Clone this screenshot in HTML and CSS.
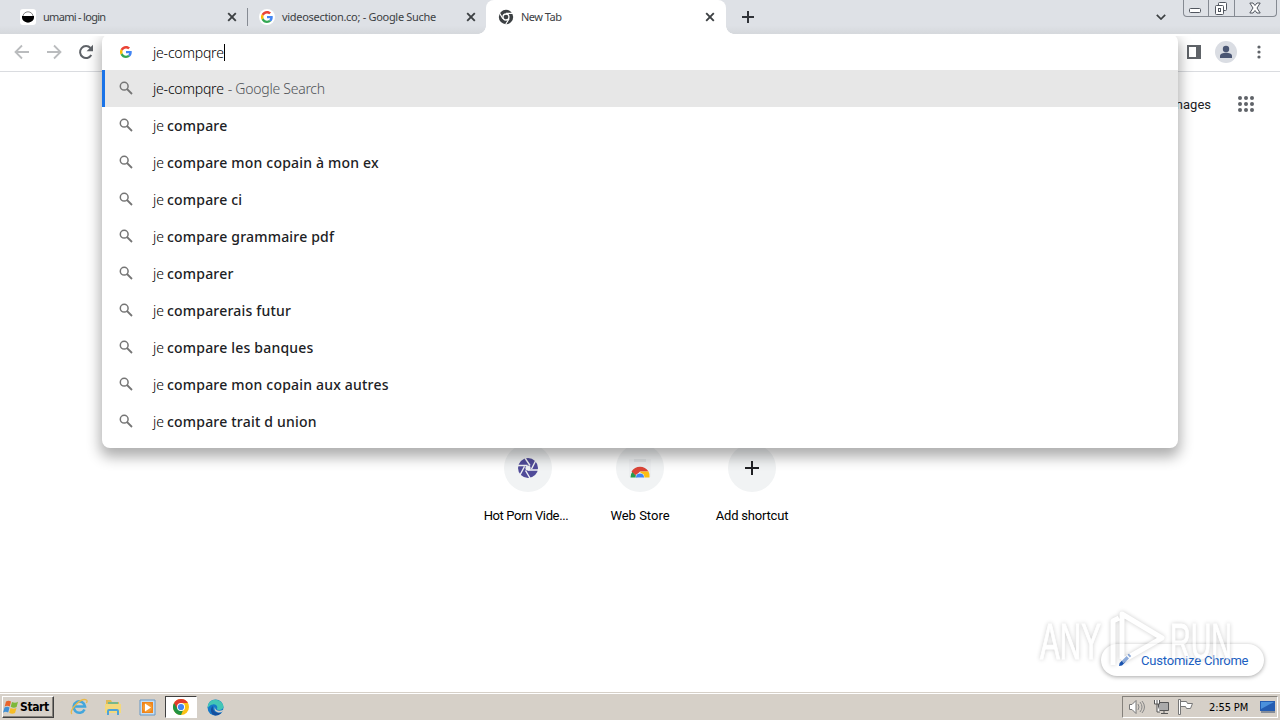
FILE: index.html
```html
<!DOCTYPE html>
<html lang="en">
<head>
    <meta charset="UTF-8">
    <title>New Tab</title>
    <link rel="stylesheet" href="styles.css">
</head>
<body>
    <svg class="defs" width="0" height="0">
        <symbol id="google" viewBox="0 0 48 48">
            <path fill="#ea4335" d="M24 9.500c3.500 0 6.700 1.200 9.200 3.600l6.900-6.900C35.900 2.400 30.500 0 24 0 14.600 0 6.500 5.400 2.600 13.200l8 6.200C12.400 13.700 17.700 9.500 24 9.500z"/>
            <path fill="#4285f4" d="M47 24.500c0-1.600-.2-3.100-.4-4.500H24v9h12.900c-.6 3-2.200 5.500-4.700 7.200l7.700 6C44.400 38 47 31.800 47 24.500z"/>
            <path fill="#fbbc05" d="M10.500 28.600A14.500 14.500 0 0 1 10.500 19.400l-8-6.200a24 24 0 0 0 0 21.600z"/>
            <path fill="#34a853" d="M24 48c6.500 0 11.900-2.100 15.900-5.800l-7.700-6c-2.200 1.500-4.900 2.300-8.200 2.300-6.300 0-11.600-4.200-13.500-9.900l-8 6.200C6.500 42.600 14.600 48 24 48z"/>
        </symbol>
        <symbol id="search" viewBox="0 0 14 14">
            <circle cx="5.200" cy="5.200" r="3.900" fill="none" stroke="#757575" stroke-width="1.500"/>
            <path d="M8 8l5 5" stroke="#757575" stroke-width="1.800"/>
        </symbol>
        <symbol id="close" viewBox="0 0 10 10">
            <path d="M1.200 1.200l7.600 7.600M8.800 1.200L1.200 8.800" stroke="#3c4043" stroke-width="1.900"/>
        </symbol>
        <symbol id="chrome" viewBox="0 0 16 16">
            <circle cx="8" cy="8" r="8" fill="#fbc116"/>
            <path fill="#229342" d="M8 8L1.070 4A8 8 0 0 0 8 16L11 9z"/>
            <path fill="#e33b2e" d="M8 4h6.930A8 8 0 0 0 1.070 4l3.500 6z"/>
            <circle cx="8" cy="8" r="4" fill="#fff"/>
            <circle cx="8" cy="8" r="3.100" fill="#4285f4"/>
        </symbol>
    </svg>

    <div class="tab-strip">
        <div class="tab first">
            <svg class="favicon" viewBox="0 0 16 16"><rect width="16" height="16" rx="3" fill="#fff"/><circle cx="8" cy="8" r="5.200" fill="#fff" stroke="#555" stroke-width=".7"/><path d="M2 7h12v1.500a6 5 0 0 1-12 0z"/></svg>
            <span class="tab-title t1">umami - login</span>
            <svg class="close"><use href="#close"/></svg>
        </div>
        <div class="tab second">
            <span class="favicon round"><svg width="12" height="12"><use href="#google"/></svg></span>
            <span class="tab-title t2">videosection.co; - Google Suche</span>
            <svg class="close"><use href="#close"/></svg>
        </div>
        <div class="tab active">
            <svg class="favicon" viewBox="0 0 16 16"><circle cx="8" cy="8" r="7.200" fill="#3c4043"/><circle cx="8" cy="8" r="3" fill="#3c4043" stroke="#fff" stroke-width="1.300"/><path d="M8 4.400h7M4.900 9.800L1.500 4M11.100 9.800L7.600 15.500" stroke="#fff" stroke-width="1.200"/></svg>
            <span class="tab-title t3">New Tab</span>
            <svg class="close"><use href="#close"/></svg>
        </div>
        <svg class="new-tab" viewBox="0 0 12 12"><path d="M6 0v12M0 6h12" stroke="#303338" stroke-width="2"/></svg>
        <svg class="tab-search" viewBox="0 0 10 6"><path d="M.8.8L5 5 9.200.8" fill="none" stroke="#3c4043" stroke-width="1.700"/></svg>
        <div class="window-buttons">
            <span><svg width="12" height="16" viewBox="0 0 12 16"><rect x=".5" y="8.500" width="11" height="4" rx="1" fill="#fff" stroke="#51565f"/></svg></span>
            <span><svg width="14" height="16" viewBox="0 0 14 16"><g fill="#fff" stroke="#51565f"><rect x="4.500" y="2.500" width="8" height="8" rx="1"/><rect x="1.500" y="5.500" width="8" height="9" rx="1"/><rect x="4.500" y="8.500" width="2" height="3"/></g></svg></span>
            <span><svg width="12" height="12" viewBox="0 0 12 12"><path d="M.8 1h3.200l2 2.500L8 1h3.200L8 6l3.200 5H8L6 8.500 4 11H.8L4 6z" fill="#fff" stroke="#51565f"/></svg></span>
        </div>
    </div>

    <div class="toolbar">
        <svg class="nav" viewBox="0 0 16 16"><path d="M15 8H2M8 1.500L1.500 8 8 14.500" fill="none" stroke="#babcbe" stroke-width="1.800"/></svg>
        <svg class="nav" viewBox="0 0 16 16"><path d="M1 8h13M8 1.500L14.500 8 8 14.500" fill="none" stroke="#babcbe" stroke-width="1.800"/></svg>
        <svg class="nav" viewBox="0 0 16 16"><path d="M13.300 11A6 6 0 1 1 12.500 4" fill="none" stroke="#5f6368" stroke-width="2"/><path d="M15 .8v6.400H8.600z" fill="#5f6368"/></svg>
        <div class="toolbar-right">
            <svg width="14" height="14" viewBox="0 0 14 14"><rect x="1" y="1" width="12" height="12" fill="none" stroke="#5f6368" stroke-width="2"/><path d="M9 0h5v14H9z" fill="#5f6368"/></svg>
            <svg width="22" height="22" viewBox="0 0 22 22"><circle cx="11" cy="11" r="11" fill="#dadde3"/><circle cx="11" cy="8" r="3.200" fill="#4a5673"/><path d="M5 17v-2c0-2 3-3.200 6-3.200s6 1.200 6 3.200v2z" fill="#4a5673"/></svg>
            <svg width="4" height="14" viewBox="0 0 4 14"><g fill="#5f6368"><circle cx="2" cy="2" r="1.600"/><circle cx="2" cy="7" r="1.600"/><circle cx="2" cy="12" r="1.600"/></g></svg>
        </div>
    </div>

    <div class="page">
        <div class="page-links">
            <span class="images">Images</span>
            <svg width="16" height="16" viewBox="0 0 16 16"><g fill="#5f6368"><circle cx="2" cy="2" r="2"/><circle cx="8" cy="2" r="2"/><circle cx="14" cy="2" r="2"/><circle cx="2" cy="8" r="2"/><circle cx="8" cy="8" r="2"/><circle cx="14" cy="8" r="2"/><circle cx="2" cy="14" r="2"/><circle cx="8" cy="14" r="2"/><circle cx="14" cy="14" r="2"/></g></svg>
        </div>
        <div class="shortcuts">
            <div class="shortcut">
                <div class="tile"><svg width="20" height="20" viewBox="0 0 20 20"><circle cx="10" cy="10" r="10" fill="#504b99"/><path d="M7 0l5 7.500M17.500 3l-4 8M20 12H10M12 20l-4.500-7.500M2 17l4.500-8.500M0 7.500h9.500" stroke="#f1f3f4" stroke-width="1.400"/><circle cx="10" cy="10" r="2.600" fill="#f1f3f4"/></svg></div>
                <span class="s1">Hot Porn Vide...</span>
            </div>
            <div class="shortcut">
                <div class="tile"><svg width="22" height="22" viewBox="0 0 22 22"><path d="M0 2h22v18H0z" fill="#eceef0"/><path d="M5 2h12v3H5z" fill="#dfe2e4"/><path d="M1.500 20.500a9.500 9.500 0 0 1 2-6l5 6z" fill="#259b4d"/><path d="M2.500 14.500a10 10 0 0 1 17 0H11l-4 4z" fill="#db4437"/><path d="M11 14.500h8.500a9 9 0 0 1 1 6H14z" fill="#fbbf13"/><path d="M6.500 20.500a4.500 4.500 0 0 1 9 0z" fill="#fff"/><path d="M7 20.500a4 4 0 0 1 8 0z" fill="#4285f4"/></svg></div>
                <span class="s2">Web Store</span>
            </div>
            <div class="shortcut">
                <div class="tile"><svg width="14" height="14" viewBox="0 0 14 14"><path d="M7 0v14M0 7h14" stroke="#202124" stroke-width="2"/></svg></div>
                <span class="s3">Add shortcut</span>
            </div>
        </div>
        <div class="customize">
            <svg width="14" height="14" viewBox="0 0 14 14"><path d="M1 13l.6-3 7-7L11 5.400l-7 7zM9.500 2.100L11 .8l2.200 2.300-1.300 1.400z" fill="#1a56b4"/></svg>
            <span>Customize Chrome</span>
        </div>
    </div>

    <div class="omnibox">
        <div class="row input"><svg class="row-icon" width="12" height="12"><use href="#google"/></svg><span class="query">je-compqre</span><i class="caret"></i></div>
        <div class="row selected"><svg class="row-icon"><use href="#search"/></svg><span class="query">je-compqre</span><span class="hint">- Google Search</span></div>
        <div class="row"><svg class="row-icon"><use href="#search"/></svg><span class="je">je</span><b>compare</b></div>
        <div class="row"><svg class="row-icon"><use href="#search"/></svg><span class="je">je</span><b>compare mon copain à mon ex</b></div>
        <div class="row"><svg class="row-icon"><use href="#search"/></svg><span class="je">je</span><b>compare ci</b></div>
        <div class="row"><svg class="row-icon"><use href="#search"/></svg><span class="je">je</span><b>compare grammaire pdf</b></div>
        <div class="row"><svg class="row-icon"><use href="#search"/></svg><span class="je">je</span><b>comparer</b></div>
        <div class="row"><svg class="row-icon"><use href="#search"/></svg><span class="je">je</span><b>comparerais futur</b></div>
        <div class="row"><svg class="row-icon"><use href="#search"/></svg><span class="je">je</span><b>compare les banques</b></div>
        <div class="row"><svg class="row-icon"><use href="#search"/></svg><span class="je">je</span><b>compare mon copain aux autres</b></div>
        <div class="row"><svg class="row-icon"><use href="#search"/></svg><span class="je">je</span><b>compare trait d union</b></div>
    </div>

    <svg class="watermark" width="204" height="70" viewBox="0 0 204 70">
        <text x="5" y="54" textLength="61" lengthAdjust="spacingAndGlyphs">ANY</text>
        <text x="135" y="54" textLength="62" lengthAdjust="spacingAndGlyphs">RUN</text>
        <path d="M84 13l-6 3v44M87 54V9l40 24-40 23"/>
    </svg>

    <div class="taskbar">
        <div class="start">
            <svg width="16" height="16" viewBox="0 0 16 16"><path d="M3 2.500c2-1.300 3.500-1 5 0L6.800 7.400c-2-1-3.300-1-5.100 0z" fill="#e8642c"/><path d="M9 3c2 1 4 1 6-.2L13.600 8c-2 1-4 .8-5.900-.2z" fill="#7db83a"/><path d="M1.500 8.500c2-1.200 3.500-1 5 0l-1.300 5c-2-1-3.400-1-5.200.2z" fill="#4090d5"/><path d="M7.500 9c2 1 4 1 6 0L12 14c-2 1.200-4 1-5.800-.2z" fill="#f6bd26"/></svg>
            <b>Start</b>
        </div>
        <div class="apps">
            <span class="app"><svg width="18" height="18" viewBox="0 0 18 18"><path d="M14.500 11.500A5.700 5.700 0 1 1 15 8.500H5" fill="none" stroke="#43a6dc" stroke-width="2.600"/><path d="M2 16C-2 13 11-1 16.500 2c1 .6.500 2-.2 3" fill="none" stroke="#e9b949" stroke-width="1.300"/></svg></span>
            <span class="app"><svg width="18" height="18" viewBox="0 0 18 18"><path d="M2 2h5l1 2h7v11H2z" fill="#dfba55"/><path d="M4 4h10v3H4z" fill="#78b78b"/><path d="M1 6h16v9H1z" fill="#f3d97d"/><path d="M3 17v-4q0-2 2-2h8q2 0 2 2v4h-2v-4H5v4z" fill="#4fa3d8"/></svg></span>
            <span class="app"><svg width="17" height="17" viewBox="0 0 17 17"><path d="M1 1h15v15H1z" fill="#c5def2" stroke="#6698c6"/><path d="M3 3h11v11H3z" fill="#ef841a"/><circle cx="8.500" cy="8.500" r="4.800" fill="#f59c32"/><path d="M6 4.500l6 4-6 4z" fill="#fff"/></svg></span>
            <span class="app current"><svg width="16" height="16"><use href="#chrome"/></svg></span>
            <span class="app"><svg width="17" height="17" viewBox="0 0 17 17"><circle cx="8.500" cy="8.500" r="8" fill="#1678c8"/><path d="M1 6C3-1 14-1 16.500 7c.3 4-4.500 5-7 3.300 2-2 0-5.300-3.500-4.900C4 5.500 2 7 .7 9z" fill="#43c6b6"/><path d="M6 7c-1 4 2 8 8.500 6.800A8 8 0 0 1 8 16.500C3 15 3 9 6 7z" fill="#154f9e"/><path d="M8 8c-.5 3.500 4 5 8.500 2.700l-1 2C11 15 6 12 8 8z" fill="#d6d0c8"/></svg></span>
        </div>
        <div class="tray">
            <svg width="18" height="16" viewBox="0 0 18 16"><path d="M1.500 5.500H4l4-4v13l-4-4H1.500z" fill="#fff" stroke="#777"/><path d="M10 5q2 3 0 6M12 3q4 5 0 10M14 2q5 6 0 12" fill="none" stroke="#888"/></svg>
            <svg width="17" height="16" viewBox="0 0 17 16"><path d="M5.500 3.500h10v8h-10zM8 14.500h7M11 12v2" fill="#aaa" stroke="#555"/><path d="M1.500 1v4h5V1M4 1v4M4 5v8h3" fill="#fff" stroke="#555"/></svg>
            <svg width="17" height="16" viewBox="0 0 17 16"><path d="M1.500.5h2v15h-2zM3.500 2.500h6l1 2h5l-2 5h-4l-1-2h-5z" fill="#fff" stroke="#777"/></svg>
            <span class="clock">2:55 PM</span>
            <svg width="16" height="14" viewBox="0 0 16 14"><path d="M0 1h15v10H0z" fill="#245db2"/><path d="M1 2h13L1 9z" fill="#4b91dc"/><path d="M1 12h14" stroke="#344b6b"/></svg>
        </div>
    </div>
</body>
</html>
```
FILE: styles.css
```css
* {
    box-sizing: border-box;
}
body {
    margin: 0;
    width: 1280px;
    height: 720px;
    overflow: hidden;
    display: flex;
    flex-direction: column;
    position: relative;
    background: #fff;
    color: #202124;
    font-family: "Noto Sans", "Open Sans", sans-serif;
}
svg {
    display: block;
    flex: none;
}
.defs {
    position: absolute;
}
.tab-strip {
    height: 34px;
    display: flex;
    align-items: center;
    background: linear-gradient(#dee1e6 75%, #d5d8dc);
}
.tab {
    height: 34px;
    display: flex;
    align-items: center;
    font-size: 11px;
    color: #3c4043;
}
.first {
    width: 248px;
    padding: 0 11px 0 20px;
    background: linear-gradient(#868b93, #868b93) right 8px / 1px 18px no-repeat;
}
.second {
    width: 238px;
    padding: 0 10px 0 11px;
}
.active {
    width: 240px;
    padding: 0 11px 0 12px;
    background: #fff;
    border-radius: 8px 8px 0 0;
    position: relative;
}
.active::before,
.active::after {
    content: "";
    position: absolute;
    bottom: 0;
    width: 8px;
    height: 8px;
}
.active::before {
    left: -8px;
    background: radial-gradient(circle at 0 0, transparent 7.500px, #fff 8px);
}
.active::after {
    right: -8px;
    background: radial-gradient(circle at 100% 0, transparent 7.500px, #fff 8px);
}
.favicon {
    width: 16px;
    height: 16px;
}
.round {
    display: grid;
    place-items: center;
    background: #fff;
    border-radius: 50%;
}
.tab-title {
    flex: 1;
    margin-left: 7px;
    padding-bottom: 2px;
    white-space: nowrap;
}
.t1 {
    letter-spacing: -0.7px;
}
.t2 {
    letter-spacing: -0.3px;
}
.t3 {
    letter-spacing: -0.5px;
}
.close {
    width: 10px;
    height: 10px;
}
.new-tab {
    width: 12px;
    height: 12px;
    margin-left: 16px;
}
.tab-search {
    width: 10px;
    height: 6px;
    margin-left: auto;
}
.window-buttons {
    width: 94px;
    height: 17px;
    margin: 0 3px 0 17px;
    align-self: flex-start;
    display: grid;
    grid-template-columns: 24px 26px 1fr;
    border: 1px solid #858a92;
    border-top: 0;
    border-radius: 0 0 4px 4px;
}
.window-buttons span {
    display: grid;
    place-items: center;
    padding-right: 2px;
}
.window-buttons span + span {
    border-left: 1px solid #858a92;
}
.toolbar {
    height: 38px;
    padding: 0 19px 2px 14px;
    display: flex;
    align-items: center;
    gap: 16px;
    border-bottom: 1px solid #dadce0;
}
.nav {
    width: 16px;
    height: 16px;
}
.toolbar-right {
    display: flex;
    align-items: center;
    gap: 14px;
    margin-left: auto;
}
.toolbar-right svg:last-child {
    margin-left: 6px;
}
.page {
    flex: 1;
    display: flex;
    flex-direction: column;
    align-items: center;
}
.page-links {
    align-self: flex-end;
    display: flex;
    align-items: center;
    gap: 27px;
    height: 64px;
    padding-right: 26px;
    font: 13px Roboto, sans-serif;
}
.shortcuts {
    display: flex;
    margin-top: 308px;
}
.shortcut {
    width: 112px;
    display: flex;
    flex-direction: column;
    align-items: center;
    font: 13px/16px Roboto, sans-serif;
    color: #000;
}
.tile {
    width: 48px;
    height: 48px;
    margin-bottom: 16px;
    display: grid;
    place-items: center;
    border-radius: 50%;
    background: #f1f3f4;
}
.shortcut span {
    white-space: nowrap;
}
.shortcut .s1 {
    margin-right: 4px;
    letter-spacing: -0.36px;
}
.shortcut .s3 {
    letter-spacing: -0.2px;
}
.customize {
    align-self: flex-end;
    display: flex;
    align-items: center;
    gap: 9px;
    width: 163px;
    height: 32px;
    margin: auto 16px 16px 0;
    padding-left: 17px;
    border-radius: 16px;
    background: #fff;
    box-shadow: 0 1px 4px rgba(0, 0, 0, .35);
    color: #1b60c2;
    font: 13px Roboto, sans-serif;
    letter-spacing: -0.2px;
    white-space: nowrap;
}
.omnibox {
    position: absolute;
    left: 102px;
    top: 34px;
    width: 1076px;
    height: 414px;
    background: #fff;
    border-radius: 8px;
    box-shadow: 0 7px 14px 2px rgba(0, 0, 0, .32);
    clip-path: inset(2px -30px -30px);
}
.row {
    height: 37px;
    display: flex;
    align-items: center;
    padding-left: 17px;
    font-size: 14px;
    white-space: nowrap;
}
.row.input {
    height: 36px;
    padding-left: 18px;
}
.input .row-icon {
    width: 12px;
    height: 12px;
    margin-right: 21px;
    margin-bottom: 0;
}
.selected {
    background: #e7e7e7;
    border-left: 3px solid #1a73e8;
    padding-left: 14px;
}
.row-icon {
    width: 14px;
    height: 14px;
    margin-right: 20px;
    margin-bottom: 2px;
}
.query {
    font-weight: 300;
    letter-spacing: -0.2px;
    color: #000;
}
.je {
    width: 14px;
    font-weight: 300;
    color: #000;
}
.row b {
    font-weight: 500;
    letter-spacing: 0.2px;
}
.caret {
    width: 1px;
    height: 17px;
    background: #000;
}
.hint {
    margin-left: 4px;
    font-weight: 300;
    letter-spacing: -0.25px;
    color: #4f5357;
}
.watermark {
    position: absolute;
    left: 1035px;
    top: 605px;
    overflow: visible;
    filter: drop-shadow(0 0 2px rgba(0, 0, 0, .4));
    opacity: .5;
}
.watermark text {
    font: 50px "Liberation Sans", sans-serif;
    fill: #fff;
    stroke: #fff;
    stroke-width: 1px;
}
.watermark path {
    fill: none;
    stroke: #fff;
    stroke-width: 5px;
    stroke-linejoin: round;
}
.taskbar {
    height: 28px;
    padding: 3px 2px 2px;
    display: flex;
    align-items: center;
    background: #d6d0c8;
    border-top: 1px solid #d6d0c8;
    box-shadow: inset 0 1px #fff;
    font-family: "DejaVu Sans Condensed", "DejaVu Sans", sans-serif;
    color: #000;
}
.start {
    width: 52px;
    height: 22px;
    display: flex;
    align-items: center;
    gap: 1px;
    border: 1px solid;
    border-color: #fff #404040 #404040 #fff;
    box-shadow: inset -1px -1px #85817b;
    font-size: 12px;
}
.start b {
    letter-spacing: -0.4px;
}
.apps {
    display: flex;
    gap: 2px;
    margin-left: 9px;
}
.app {
    width: 32px;
    height: 22px;
    display: grid;
    place-items: center;
}
.current {
    background: #fff;
    border: 1px solid;
    border-color: #404040 #fff #fff #404040;
}
.tray {
    width: 156px;
    height: 22px;
    margin-left: auto;
    padding-left: 5px;
    display: flex;
    align-items: center;
    gap: 7px;
    border: 1px solid;
    border-color: #85817b #fff #fff #85817b;
}
.clock {
    width: 42px;
    margin: 0 2px 0 8px;
    font-size: 11px;
    letter-spacing: -0.1px;
    white-space: nowrap;
}
```
